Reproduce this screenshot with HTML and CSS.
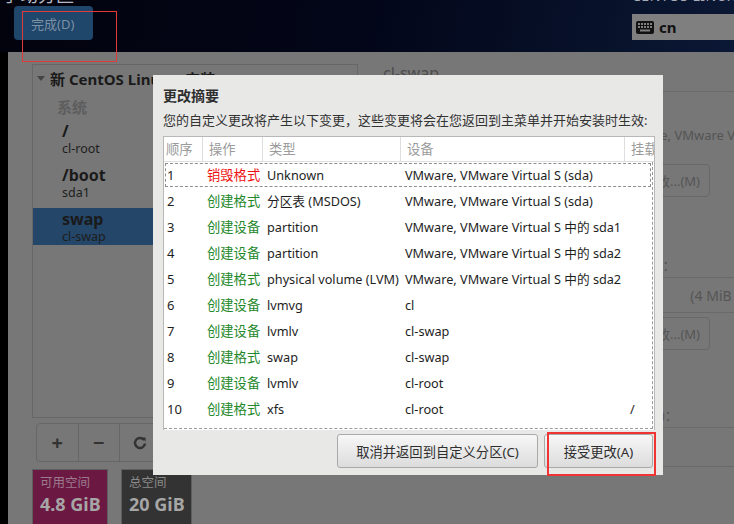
FILE: index.html
```html
<!DOCTYPE html>
<html lang="zh-CN">
<head>
<meta charset="utf-8">
<title>手动分区</title>
<link rel="stylesheet" href="styles.css">
</head>
<body>
<div class="screen">
  <header class="topbar">
    <div class="tl">
      <div class="pagetitle">手动分区</div>
      <button class="done">完成(D)</button>
    </div>
    <div class="tr">
      <div class="product">CENTOS LINUX 7 安装</div>
      <div class="kbd">
        <svg class="kbd-ico" width="18" height="13" viewBox="0 0 18 13">
          <rect x="0" y="0" width="18" height="13" rx="2" fill="#111"/>
          <g fill="#7f7f7f">
            <rect x="2" y="2" width="2" height="2"/><rect x="5" y="2" width="2" height="2"/><rect x="8" y="2" width="2" height="2"/><rect x="11" y="2" width="2" height="2"/><rect x="14" y="2" width="2" height="2"/>
            <rect x="2" y="5" width="2" height="2"/><rect x="5" y="5" width="2" height="2"/><rect x="8" y="5" width="2" height="2"/><rect x="11" y="5" width="2" height="2"/><rect x="14" y="5" width="2" height="2"/>
            <rect x="4" y="8.5" width="10" height="2"/>
          </g>
        </svg>
        <span class="kbd-txt">cn</span>
      </div>
    </div>
  </header>
  <div class="body">
    <div class="strip"></div>
    <div class="content">
      <div class="leftcol">
        <div class="panel">
          <div class="panel-head"><span class="tri"></span><span>新 CentOS Linux 7 安装</span></div>
          <div class="group">系统</div>
          <div class="entry"><div class="ename">/</div><div class="edesc">cl-root</div></div>
          <div class="entry"><div class="ename">/boot</div><div class="edesc">sda1</div></div>
          <div class="entry selected"><div class="ename">swap</div><div class="edesc">cl-swap</div></div>
        </div>
        <div class="tools">
          <div class="tbtn">+</div>
          <div class="tbtn">−</div>
          <div class="tbtn">
            <svg width="14" height="14" viewBox="0 0 14 14"><path d="M11.2 4.2 A5 5 0 1 0 12 7.5" fill="none" stroke="#333" stroke-width="2.4"/><path d="M8.6 1.6 L12.6 1.6 L12.6 5.6 Z" fill="#333"/></svg>
          </div>
          <div class="tbtn"></div>
        </div>
        <div class="spaces">
          <div class="space avail"><div class="slabel">可用空间</div><div class="sval">4.8 GiB</div></div>
          <div class="space total"><div class="slabel">总空间</div><div class="sval">20 GiB</div></div>
        </div>
      </div>
      <div class="rightcol">
        <div class="rtitle">cl-swap</div>
        <div class="rsep"></div>
        <div class="rval">VMware, VMware Virtual S (sda)</div>
        <div class="rbtn">修改...(M)</div>
        <div class="rlabel">卷组(V)：</div>
        <div class="rcombo"><span class="vgname">cl</span><span class="vgfree">(4 MiB 空闲)</span></div>
        <div class="rbtn second">修改...(M)</div>
        <div class="rlabel lower">名称(N)：</div>
        <div class="rbox"></div>
      </div>
    </div>
  </div>
</div>

<div class="dialog">
  <div class="dtitle">更改摘要</div>
  <div class="ddesc">您的自定义更改将产生以下变更，这些变更将会在您返回到主菜单并开始安装时生效:</div>
  <div class="tframe">
    <div class="thead">
      <div class="th first">顺序</div>
      <div class="th">操作</div>
      <div class="th">类型</div>
      <div class="th">设备</div>
      <div class="th">挂载点</div>
    </div>
    <div class="tbody">
      <div class="row focus"><div class="c n">1</div><div class="c act red">销毁格式</div><div class="c">Unknown</div><div class="c">VMware, VMware Virtual S (sda)</div><div class="c m"></div></div>
      <div class="row"><div class="c n">2</div><div class="c act green">创建格式</div><div class="c">分区表 (MSDOS)</div><div class="c">VMware, VMware Virtual S (sda)</div><div class="c m"></div></div>
      <div class="row"><div class="c n">3</div><div class="c act green">创建设备</div><div class="c">partition</div><div class="c">VMware, VMware Virtual S 中的 sda1</div><div class="c m"></div></div>
      <div class="row"><div class="c n">4</div><div class="c act green">创建设备</div><div class="c">partition</div><div class="c">VMware, VMware Virtual S 中的 sda2</div><div class="c m"></div></div>
      <div class="row"><div class="c n">5</div><div class="c act green">创建格式</div><div class="c">physical volume (LVM)</div><div class="c">VMware, VMware Virtual S 中的 sda2</div><div class="c m"></div></div>
      <div class="row"><div class="c n">6</div><div class="c act green">创建设备</div><div class="c">lvmvg</div><div class="c">cl</div><div class="c m"></div></div>
      <div class="row"><div class="c n">7</div><div class="c act green">创建设备</div><div class="c">lvmlv</div><div class="c">cl-swap</div><div class="c m"></div></div>
      <div class="row"><div class="c n">8</div><div class="c act green">创建格式</div><div class="c">swap</div><div class="c">cl-swap</div><div class="c m"></div></div>
      <div class="row"><div class="c n">9</div><div class="c act green">创建设备</div><div class="c">lvmlv</div><div class="c">cl-root</div><div class="c m"></div></div>
      <div class="row"><div class="c n">10</div><div class="c act green">创建格式</div><div class="c">xfs</div><div class="c">cl-root</div><div class="c m">/</div></div>
      <div class="row"><div class="c n">11</div><div class="c act green">创建格式</div><div class="c">xfs</div><div class="c">VMware, VMware Virtual S 中的 sda1</div><div class="c m">/boot</div></div>
    </div>
  </div>
  <div class="dbtns">
    <button class="btn cancel">取消并返回到自定义分区(C)</button>
    <button class="btn accept">接受更改(A)</button>
  </div>
</div>

<div class="mark mark-done"></div>
<div class="mark mark-accept"></div>
</body>
</html>
```

FILE: styles.css
```css
* { box-sizing: border-box; margin: 0; padding: 0; }
html, body { width: 734px; height: 524px; overflow: hidden; }
body {
  position: relative;
  background: #777;
  color: #1e1e1e;
  font-family: "Noto Sans", "Noto Sans CJK SC", sans-serif;
}
button { font-family: "Noto Sans", "Noto Sans CJK SC", sans-serif; }

.screen { display: flex; flex-direction: column; width: 734px; height: 524px; }

/* header */
.topbar {
  height: 52px; flex: none;
  display: flex; justify-content: space-between;
  padding-left: 14px;
  background: linear-gradient(100deg, #02030d 0%, #030619 50%, #071129 80%, #0b1835 100%);
}
.tl { display: flex; flex-direction: column; }
.pagetitle {
  font-size: 18px; line-height: 20px; color: #b6bac4;
  margin: -15px 0 0 -12px; white-space: nowrap;
}
.done {
  margin-top: 1px; width: 79px; height: 34px;
  background: #1f466b; border: none; border-radius: 4px;
  color: #7e90a3; font-size: 13px; text-align: left; padding-left: 17px;
}
.tr { width: 102px; display: flex; flex-direction: column; }
.product {
  font-size: 14px; line-height: 16px; color: #a9adb6;
  margin-top: -12px; white-space: nowrap; letter-spacing: 0.5px;
}
.kbd {
  margin-top: 10px; height: 26px; background: #7f7f7f;
  display: flex; align-items: center; gap: 5px; padding-left: 4px;
}
.kbd-txt { font-weight: 700; font-size: 15px; color: #111; line-height: 16px; }

/* body */
.body { flex: 1; display: flex; }
.strip { width: 8px; background: #000; flex: none; }
.content { flex: 1; display: flex; padding: 12px 0 0 24px; background: #777; }

.leftcol { width: 326px; flex: none; display: flex; flex-direction: column; }
.panel { height: 354px; border: 1px solid #676767; }
.panel-head {
  height: 26px; display: flex; align-items: center;
  font-weight: 700; font-size: 15px; color: #1a1a1a; white-space: nowrap;
}
.tri {
  width: 0; height: 0; margin: 0 5px 0 4px;
  border-left: 4px solid transparent; border-right: 4px solid transparent;
  border-top: 5px solid #444;
}
.group {
  margin-top: 7px; line-height: 18px; padding-left: 24px;
  font-weight: 700; font-size: 15px; color: #5d5d5d;
}
.entry { height: 37px; margin-top: 4px; padding: 1px 0 0 29px; }
.entry + .entry { margin-top: 7px; }
.entry.selected { background: #234669; }
.ename { font-weight: 700; font-size: 16px; line-height: 20px; color: #1a1a1a; }
.edesc { font-size: 12.5px; line-height: 16px; color: #1e1e1e; }

.tools {
  margin: 5px 0 0 4px; width: 168px; height: 39px;
  border: 1px solid #666; border-radius: 4px; display: flex;
}
.tbtn {
  width: 42px; display: flex; align-items: center; justify-content: center;
  border-right: 1px solid #666; font-size: 20px; font-weight: 700; color: #333; line-height: 1;
}
.spaces { margin-top: 7px; display: flex; gap: 13px; }
.space { height: 60px; border: 1px solid #5e5e5e; padding: 5px 0 0 7px; }
.space.avail { width: 76px; background: #6b1943; }
.space.total { width: 71px; background: #333; }
.slabel { font-size: 12.5px; line-height: 16px; color: #9d7b8e; }
.space.total .slabel { color: #8a8a8a; }
.sval { margin-top: 2px; font-size: 18px; line-height: 22px; font-weight: 700; color: #a6a6a6; white-space: nowrap; }

.rightcol { flex: 1; display: flex; flex-direction: column; padding-left: 25px; }
.rtitle { font-size: 16px; line-height: 18px; color: #4c4c4c; }
.rsep { margin-top: 9px; border-top: 1px solid #6a6a6a; }
.rval { margin: 34px 0 0 235px; font-size: 13px; line-height: 18px; color: #545454; white-space: nowrap; }
.rbtn {
  margin: 20px 0 0 251px; width: 76px; height: 33px;
  border: 1px solid #686868; border-radius: 4px;
  display: flex; align-items: center; justify-content: center;
  font-size: 13px; color: #555; white-space: nowrap;
}
.rbtn.second { margin-top: 4px; }
.rlabel { margin: 59px 0 0 238px; font-size: 13px; line-height: 18px; color: #555; white-space: nowrap; }
.rlabel.lower { margin-top: 56px; }
.rcombo {
  margin: 3px 0 0 250px; width: 200px; height: 36px;
  border: 1px solid #6a6a6a; border-radius: 3px;
  display: flex; align-items: center; padding-left: 8px; gap: 38px;
  font-size: 14px; color: #555; white-space: nowrap;
}
.rbox { margin: 3px 0 0 250px; width: 200px; height: 40px; border: 1px solid #6a6a6a; border-radius: 3px; }

/* dialog */
.dialog {
  position: absolute; left: 153px; top: 75px; width: 510px; height: 400px;
  background: #e8e8e7; padding: 12px 8px 0 10px;
  display: flex; flex-direction: column;
}
.dtitle { font-size: 14px; line-height: 18px; font-weight: 700; color: #2e2e2e; }
.ddesc { margin-top: 6px; font-size: 13px; line-height: 18px; color: #333; white-space: nowrap; }
.tframe {
  margin-top: 7px; height: 294px; background: #fff;
  border: 1px solid #b8b8b8; border-bottom: none; overflow: hidden;
}
.thead {
  display: grid; grid-template-columns: 39px 60px 138px 224px 80px;
  height: 25px; border-bottom: 1px solid #dedede; width: 541px;
}
.th {
  border-right: 1px solid #dedede; padding-left: 6px;
  font-size: 13.3px; line-height: 24px; color: #9b9b9b; white-space: nowrap;
}
.th.first { padding-left: 2px; }
.tbody {
  width: 489px; height: 267px; overflow: hidden;
  border-right: 1px dashed #9a9a9a; border-bottom: 1px dashed #9a9a9a;
}
.row {
  display: grid; grid-template-columns: 39px 60px 138px 224px 80px;
  width: 488px; height: 26px;
  font-size: 12.7px; color: #1e1e1e;
}
.row.focus { outline: 1px dashed #8e8e8e; outline-offset: -2px; }
.c { padding-left: 4px; line-height: 26px; white-space: nowrap; }
.c.n { padding-left: 3px; font-size: 13px; }
.c.m { padding-left: 5px; }
.act { font-size: 13.3px; }
.red { color: #ee1111; }
.green { color: #23882a; }

.dbtns { margin-top: 4px; display: flex; justify-content: flex-end; gap: 6px; padding-right: 2px; }
.btn {
  height: 34px; border: 1px solid #a9a9a9; border-radius: 3px;
  background: linear-gradient(#f7f7f7, #dcdcdc);
  font-size: 13.3px; color: #2e2e2e;
}
.btn.cancel { width: 201px; }
.btn.accept { width: 109px; }

/* annotations */
.mark { position: absolute; border: 1px solid #e23a3a; pointer-events: none; }
.mark-done { left: 22px; top: 11px; width: 95px; height: 51px; }
.mark-accept { left: 547px; top: 432px; width: 109px; height: 44px; border: 2px solid #f03434; }
```
